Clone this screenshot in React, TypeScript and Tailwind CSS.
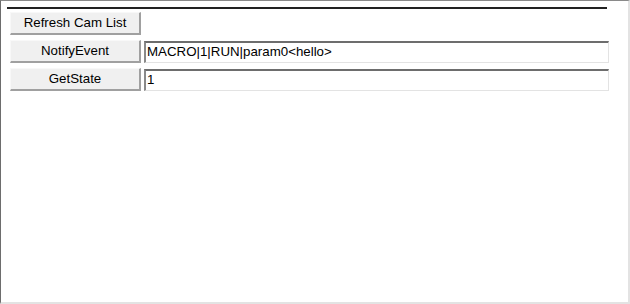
export default function App() {
  const font = { fontFamily: '"Liberation Sans", Arial, sans-serif' };

  const btn =
    'w-[131px] h-[23px] bg-[#f0f0f0] border-t border-l border-t-[#f8f8f8] border-l-[#f8f8f8] border-b-2 border-r-2 border-b-[#a0a0a0] border-r-[#a0a0a0] text-[13.3px] text-black flex items-center justify-center';

  const field =
    'ml-[3px] w-[465px] h-[22px] bg-white border-t-2 border-l-2 border-t-[#6d6d6d] border-l-[#8a8a8a] border-b border-r border-b-[#e3e3e3] border-r-[#e3e3e3] text-[13.3px] text-black px-[1px] flex items-center';

  return (
    <div
      className="w-[630px] h-[304px] bg-white border-t border-l border-t-[#8a8a8a] border-l-[#6d6d6d] border-b-2 border-r-2 border-b-[#e3e3e3] border-r-[#e3e3e3] overflow-hidden"
      style={font}
    >
      <div className="pl-[6px] pt-[6px]">
        <div className="w-[600px] border-t-2 border-t-[#222222]" />
      </div>

      <div className="pl-[9px] pt-[3px] flex flex-col gap-[5px]">
        <div className="flex items-center">
          <button className={btn}>Refresh Cam List</button>
        </div>

        <div className="flex items-center">
          <button className={btn}>NotifyEvent</button>
          <div className={field}>MACRO|1|RUN|param0&lt;hello&gt;</div>
        </div>

        <div className="flex items-center">
          <button className={btn}>GetState</button>
          <div className={field}>1</div>
        </div>
      </div>
    </div>
  );
}
